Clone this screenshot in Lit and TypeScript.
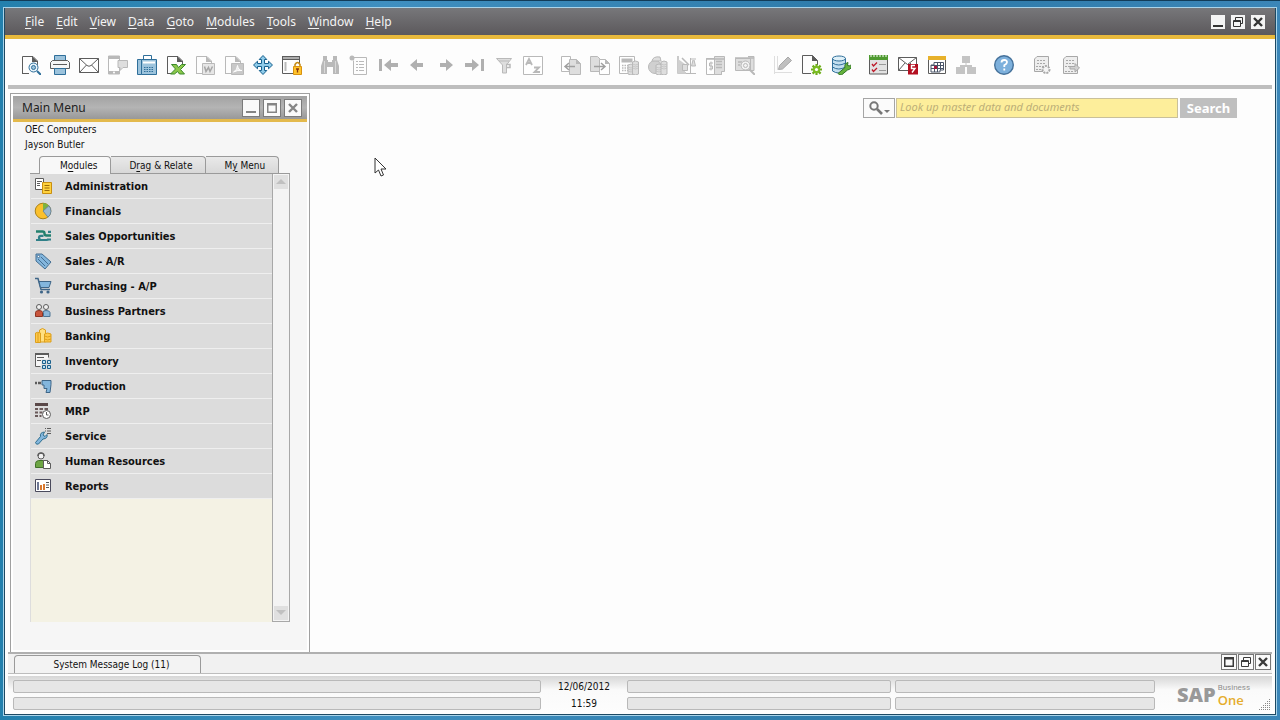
import { LitElement, html, svg, css } from "lit";
import { customElement, state } from "lit/decorators.js";
import { classMap } from "lit/directives/class-map.js";

const G = "#b9b9b9";
const L = "#dedede";
const D = "#5c5c5c";
const B = "#2f6f9a";
const S = "#9cc3dc";

const coins = (x: number, y: number, h: number, f: string, s: string) => svg`
  <path d="M${x} ${y + 1}q3-2 6 0v${h}q-3 2-6 0z" fill=${f} stroke=${s}/>
  <path d="M${x} ${y + 3}q3 2 6 0M${x} ${y + 5}q3 2 6 0M${x} ${y + 7}q3 2 6 0" fill="none" stroke=${s} stroke-width=".6"/>`;

const page = (c: string) => svg`<path d="M1.500 19V1.500H12L16.500 6V10M1.500 18.500H8" fill="none" stroke=${c}/><path d="M11 1v6h6z" fill=${c}/>`;

const icons: Record<string, unknown> = {
  preview: svg`${page(D)}<circle cx="12.500" cy="12.500" r="4.500" fill="#e8f3fa" stroke=${B}/><circle cx="12.500" cy="12.500" r="2" fill=${S} stroke=${B}/><path d="M16 16l4 4" stroke=${B} stroke-width="2"/>`,
  print: svg`<path d="M4.500 .5h11v5h-11z" fill=${S} stroke=${B}/><path d="M2.500 5.500h15l2 2v6h-19v-6z" fill="#f6f6f6" stroke=${D}/><path d="M3 9.500h14" stroke=${D}/><path d="M4.500 13.500h11v6h-11z" fill=${S} stroke=${B}/>`,
  mail: svg`<path d="M.5 3.500h19v14H.5z" fill="#fff" stroke=${D}/><path d="M.5 3.500L8 10.500q2 1.500 4 0l7.500-7M.5 17.500L7.500 10M19.500 17.500L12.500 10" fill="none" stroke=${D}/>`,
  sms: svg`<path d="M.5 1h11v18H.5z" fill="#fff" stroke=${G}/><path d="M0 1h12v3H0zM0 16h12v3H0z" fill=${G}/><circle cx="6" cy="17.500" r="1" fill="#fff"/><path d="M10 5.500h9.500v7H15l-3 3v-3h-2z" fill=${L} stroke=${G}/>`,
  fax: svg`<path d="M6.500 .5h8v5h-8z" fill="#fff" stroke=${B}/><path d="M.5 4.500h4v15h-4z" fill=${S} stroke=${B}/><path d="M4.500 4.500h15v15h-15z" fill=${S} stroke=${B}/><path d="M6 7.500h12" stroke="#fff" stroke-width="2"/><path d="M7 12.500h10M7 14.500h10M7 16.500h10" stroke=${B} stroke-dasharray="1.500 1"/>`,
  excel: svg`${page(D)}<path d="M5.500 9.500h5l2 3 3-3h4l-5 5 4 4.500h-5l-2-2.500-3 2.500h-4l5-5z" fill="#8cc84b" stroke="#3c8a2c"/>`,
  word: svg`${page(G)}<path d="M7.500 8.500h12v11h-12z" fill="#e6e6e6" stroke=${G}/><path d="M9.500 11.500l1.500 5 2.500-4 1.500 4 2.500-5" fill="none" stroke="#a5a5a5" stroke-width="1.500"/>`,
  pdf: svg`${page(G)}<path d="M7.500 8.500h12v11h-12z" fill="#c8c8c8" stroke=${G}/><path d="M9.500 17q4-2 4-6.500q1 5 4.500 5q-5-.5-8.500 1.500z" fill="#eee" stroke="#fff"/>`,
  move: svg`<path d="M10 .5l3.800 4h-2.300v4h4V6.200l4 3.800-4 3.800v-2.300h-4v4h2.300L10 19.500l-3.800-4h2.300v-4h-4v2.300L.5 10l4-3.800v2.300h4v-4H6.200z" fill="#8fcbe9" stroke="#17618f"/>`,
  lock: svg`<path d="M.5 1v17.500h11M17.500 4v4" fill="none" stroke=${D}/><path d="M0 1h18v4H0z" fill=${D}/><path d="M1 3h16" stroke="#fff"/><path d="M3.500 7v9" stroke=${G} stroke-width="2"/><path d="M13 12V9.500q2.500-4 5 0V12" fill="none" stroke="#c68a12" stroke-width="1.500"/><path d="M11.500 11.500h8v8h-8z" fill="#ffc32b" stroke="#d8920f"/><path d="M14 14h3M15.500 14v3.500" stroke="#8a3a10" stroke-width="1.300"/>`,
  find: svg`<path d="M3 1h4v4h1v2h4V5h1V1h4v4l2 6v8h-6v-7H7v7H1v-8l2-6z" fill=${G}/><path d="M4.500 6v12M15.500 6v12" stroke="#d8d8d8"/>`,
  list: svg`<path d="M4.500 2.500h13v17h-13v-14" fill="none" stroke=${G}/><circle cx="3" cy="3" r="2.500" fill=${G}/><path d="M7 6.500h2m1 0h5M7 9.500h2m1 0h5M7 12.500h2m1 0h5M7 15.500h2m1 0h5" stroke=${G}/>`,
  first: svg`<path d="M1 4h3v12H1zM6 10l7-6v4h7v4h-7v4z" fill="#b0b0b0"/>`,
  prev: svg`<path d="M3 10l7-6v4h6v4h-6v4z" fill="#b0b0b0"/>`,
  next: svg`<path d="M17 10l-7-6v4H4v4h6v4z" fill="#b0b0b0"/>`,
  last: svg`<path d="M19 4h-3v12h3zM14 10L7 4v4H0v4h7v4z" fill="#b0b0b0"/>`,
  filter: svg`<path d="M2.500 3.500h15L12.500 10v8h-4v-8z" fill=${L} stroke=${G}/><path d="M5 6h10" stroke=${G}/><path d="M12 9.500h4v3h-3" fill="none" stroke=${G} stroke-width="1.500"/>`,
  sort: svg`<path d="M.5 1.500h19v18H.5z" fill="#fff" stroke=${G}/><path d="M3 10l3-6 3 6M4 8h4" fill="none" stroke=${G} stroke-width="1.800"/><path d="M11 12.500h5l-4.500 4.500H17" fill="none" stroke=${G} stroke-width="1.800"/>`,
  baseDoc: svg`<path d="M.5 1.500h9v15h-9z" fill="#fff" stroke=${G}/><path d="M8.500 4.500h7l4 4v11h-11z" fill=${L} stroke=${G}/><path d="M15 4v5h5z" fill=${G}/><path d="M14 11.500H5M8 8l-4 3.500 4 3.500" fill="none" stroke="#a0a0a0" stroke-width="1.500"/>`,
  targetDoc: svg`<path d="M.5 1.500h7l4 4v11H.5z" fill=${L} stroke=${G}/><path d="M9.500 4.500h6l4 4v11h-10z" fill="#fff" stroke=${G}/><path d="M15 4v5h5z" fill=${G}/><path d="M4 11.500h10M11 8l4 3.500-4 3.500" fill="none" stroke="#a0a0a0" stroke-width="1.500"/>`,
  calc: svg`<path d="M.5 1.500h15v17H.5z" fill="#fff" stroke=${G}/><path d="M2.500 3.500h11v4h-11z" fill=${G}/><path d="M3 10.500h7M3 13h7M3 15.500h7" stroke=${G} stroke-width="1.500" stroke-dasharray="1.500 1"/>${coins(9, 9, 9, L, G)}${coins(13.5, 6, 12, L, G)}`,
  payment: svg`<circle cx="7" cy="12" r="6.500" fill="#d0d0d0" stroke=${G}/><path d="M4 6q1-5 8-4l1 4z" fill=${L} stroke=${G}/>${coins(8, 9, 9, L, G)}${coins(13, 6, 12, L, G)}`,
  profit: svg`<path d="M1 1v17h8M5 3l7 7" fill="none" stroke=${G} stroke-width="1.500"/><path d="M1 4l7 5v9H1z" fill="#cfcfcf"/><path d="M5.500 9.500h5v6h-5zM13.500 3v16M9 18.500h10M13 4h6M16 5l-1.500 6h4L17 5" fill=${L} stroke=${G}/>`,
  volume: svg`<path d="M.5 3.500h15v16H.5z" fill="#fff" stroke=${G}/><path d="M8.500 1.500h10v15h-3v3h-7z" fill=${L} stroke=${G}/><path d="M10 6.500h6M10 9.500h6M10 12.500h6M0 4h19" stroke=${G} stroke-width="1.300"/><path d="M7 8H3.500v3h3v3H3M5 6.500v9" fill="none" stroke=${G}/>`,
  volumeFind: svg`<path d="M.5 3.500h15v12H.5zM13 1.500h6v14h-4" fill=${L} stroke=${G}/><path d="M0 3h19M3 7h4M3 10h2" stroke=${G} stroke-width="1.500"/><circle cx="10.500" cy="10.500" r="4.500" fill="#f2f2f2" stroke=${G}/><circle cx="10.500" cy="10.500" r="2" fill="none" stroke=${G}/><path d="M14 14l6 6" stroke=${G} stroke-width="2"/>`,
  edit: svg`<path d="M1.500 1v18M1 17.500h18M4.500 1v14" fill="none" stroke=${L}/><path d="M5.500 14.500l1-4L15 2l3.500 3.500-9 8.500z" fill="#c0c0c0" stroke="#a8a8a8"/>`,
  newForm: svg`<path d="M.5 .5h10l5 5V10M.5 .5v18H9" fill="none" stroke=${D}/><path d="M10 0v6h6z" fill=${D}/><path d="M14.500 9v11M9 14.500h11M10.600 10.600l8 8M18.600 10.600l-8 8" stroke="#6fae1b" stroke-width="2.200"/><circle cx="14.500" cy="14.500" r="3.500" fill="#7bbd22"/><circle cx="14.500" cy="14.500" r="1.600" fill="#fff"/>`,
  database: svg`<path d="M1.500 3v13q6 4 13 0V3" fill="#c3dfef" stroke=${B}/><ellipse cx="8" cy="3.500" rx="6.500" ry="2.500" fill="#dff0f8" stroke=${B}/><path d="M1.500 8q6 4 13 0M1.500 12q6 4 13 0" fill="none" stroke=${B}/><path d="M7 18.500l7-6q-1-4 3-5l-.5 3 3 .5 1-2q1 5-4 6l-6 5q-3 0-3.500-1.500z" fill="#64b23c" stroke="#34752a"/>`,
  tasks: svg`<path d="M.5 2.500h18v16.500H.5z" fill="#e2e2e2" stroke=${D}/><path d="M0 0h19v5H0z" fill="#4e9a30"/><path d="M2 0v2m3-2v2m3-2v2m3-2v2m3-2v2m3-2v2" stroke="#fff"/><path d="M3 9l1.500 2L8 7.500M3 14.500l1.500 2L8 13" fill="none" stroke="#bd1828" stroke-width="1.300"/><path d="M10 9.500h7M10 15.500h7" stroke="#9a9a9a"/>`,
  alert: svg`<path d="M.5 2.500h18v13H.5z" fill="#fff" stroke=${D}/><path d="M.5 2.500l9 7 9-7M.5 15.500L7 8M18.500 15.500L12 8" fill="none" stroke=${D}/><path d="M10 9h10v10.500H10z" fill="#b30f20"/><path d="M17 10.500h-3.500v3H17l-3 4" fill="none" stroke="#fff" stroke-width="1.400"/>`,
  calendar: svg`<path d="M1.500 1.500h17v17h-17z" fill="#fff" stroke=${D}/><path d="M1 1h18v4H1z" fill="#e7b12b"/><path d="M7 7.500h9.500v7.500H13v2H4v-7h3zM4 10.500h12M4 13.500h12M7.500 10v7M10.500 7v10M13.500 7v8" fill="none" stroke="#4a5568"/><path d="M7 11h3v3H7z" fill="#a3183c"/>`,
  org: svg`<path d="M6 1h8v7H6zM0 12h9v7H0zM11 12h9v7h-9zM9.500 8h1v3h-1zM4 10h12v2H4z" fill="#c4c4c4"/>`,
  help: svg`<circle cx="10" cy="10" r="9.300" fill="#7db0dc" stroke="#45719a" stroke-width="1.400"/><path d="M7.500 7.500q0-2.500 2.800-2.500t2.700 2.300q0 1.500-2.700 3v1.700M10.300 13.500v2" fill="none" stroke="#fff" stroke-width="1.800"/>`,
  sheetGear: svg`<path d="M5 1.500h11.500v15h-14V4z" fill="#eee" stroke="#a8a8a8"/><path d="M5 5.500h9M5 8.500h9M4 11.500h9M4 14.500h6" stroke="#a8a8a8" stroke-dasharray="2 1"/><circle cx="14" cy="14.500" r="3.500" fill="#f4f4f4" stroke="#a8a8a8" stroke-width="2" stroke-dasharray="2 1"/>`,
  sheetArrow: svg`<path d="M5 1.500h11.500v17h-14V4z" fill="#eee" stroke="#a8a8a8"/><path d="M5 5.500h9M5 8.500h9M4 11.500h5M4 16.500h9" stroke="#a8a8a8" stroke-dasharray="2 1"/><path d="M9 11.500h5v-3l4.500 4.500-4.500 4v-3H9z" fill="#d0d0d0" stroke="#a8a8a8"/>`,

  administration: svg`<path d="M1.500 1.500h8v11h-8z" fill="#fff" stroke=${D}/><path d="M3 4.500h5M3 6.500h3M3 8.500h3" stroke=${D}/><path d="M8.500 5.500h9v11h-9z" fill="#ffd23e" stroke="#c98f10"/><path d="M10.500 8.500h5M10.500 11h5M10.500 13.500h5" stroke="#9a6b08"/>`,
  financials: svg`<circle cx="9" cy="9" r="7.800" fill="#fbc02d" stroke="#a98218"/><path d="M9 9V1a8 8 0 0 1 6 2.700z" fill="#7cb342"/><path d="M9 9l6-5.300A8 8 0 0 1 14 15.200z" fill="#9ab8d0" stroke="#5e7e98" stroke-width=".8"/>`,
  opportunities: svg`<path d="M2 4.500h6.500q2 0 2 2t2 2H17" fill="none" stroke="#23806d" stroke-width="2.400"/><path d="M17 4.800h-3M2 13h10.500q1.500 0 1.500-.5h3M9.500 8.800H7q-2 0-2 2t2 2" fill="none" stroke="#2f8088" stroke-width="2.200"/>`,
  sales: svg`<path d="M2 2h6l9 8-6 7-9-8z" fill="#83b6dd" stroke="#456f93"/><path d="M4 7l7 7M7 5l7 7" stroke="#456f93"/><circle cx="4.500" cy="4.500" r="1.200" fill="#fff" stroke="#456f93"/>`,
  purchasing: svg`<path d="M1 1.500h3l3 11h9" fill="none" stroke="#3f6688" stroke-width="1.500"/><path d="M5 4.500h12l-2 6H6.500z" fill="#83b6dd" stroke="#3f6688"/><circle cx="7.500" cy="15" r="1.600" fill="#3f6688"/><circle cx="14" cy="15" r="1.600" fill="#3f6688"/>`,
  partners: svg`<circle cx="5" cy="5" r="2.500" fill="#f0f0f0" stroke=${D}/><circle cx="12" cy="5" r="2.500" fill="#f0f0f0" stroke=${D}/><path d="M1.500 14.500v-4q0-2 3.500-2t3.500 2v4z" fill="#c9563d" stroke="#8e3524"/><path d="M9.500 14.500v-4q-1-2 2.500-2t4 2v4z" fill="#8db7d9" stroke="#4d7494"/>`,
  banking: svg`<path d="M5.500 3q3-3 6 0v12h-6z" fill="#ffdf80" stroke="#dc9f1c"/><path d="M1.500 6q2-1.500 5 0v9.500h-5zM10.500 7q3-2 6.500 0v8h-6.500z" fill="#ffc94a" stroke="#dc9f1c"/><path d="M10.500 9q3 2 6.500 0M10.500 12q3 2 6.500 0M4 6v9" fill="none" stroke="#dc9f1c"/>`,
  inventory: svg`<path d="M1.500 1.500h13v6h-7v7h-6z" fill="#f6f6f6"/><path d="M14.500 1.500v4M1.500 1.500v13h5" fill="none" stroke=${D}/><path d="M1 1h14v2H1z" fill=${D}/><path d="M3 5.500h7M3 8.500h4" stroke=${D}/><path d="M8.500 8.500h3v3h-3zM13.500 8.500h3v3h-3zM8.500 13.500h3v3h-3zM13.500 13.500h3v3h-3z" fill="#bfe0f2" stroke="#1c618d"/>`,
  production: svg`<path d="M1 6h2M4 6h3" stroke=${D} stroke-width="2.500"/><path d="M8 3.500h9v4l-1 8h-4l1-4h-3V8H8z" fill="#83b6dd" stroke="#3f6688"/>`,
  mrp: svg`<path d="M1 1h13v3H1z" fill="#5a4848"/><path d="M1 6h3v2H1zM5.500 6H9v2H5.500zM10.500 6H14v2h-3.500zM1 9.500h3v2H1zM5.500 9.500h3v2h-3zM1 13h3v2H1zM5.500 13h2v2h-2z" fill="#6a5a5a"/><circle cx="12.500" cy="12.500" r="4" fill="#fff" stroke=${D}/><path d="M12.500 10v3h2" fill="none" stroke=${D}/>`,
  service: svg`<path d="M1.500 15.500l5-6q-1-4 4-4.500l-1.500 3 2 1.500 2-2q1 4-4 4.500l-4.500 5q-2.500 1-3-1.500z" fill="#83b6dd" stroke="#2f6f8f"/><path d="M11 1.500h1m1 0h4M11 4h1m1 0h4M13 6.500h4" stroke=${D}/>`,
  hr: svg`<circle cx="7" cy="4" r="3" fill="#f2f2f2" stroke=${D}/><path d="M4 4q0-3 3-3t3 3" fill="none" stroke=${D} stroke-width="1.500"/><path d="M1.500 15.500v-4q0-2.500 3-3h5l1 7z" fill="#6da544" stroke="#41702a"/><path d="M9.500 8.500h4l3 3v5h-7z" fill="#fff" stroke=${D}/><path d="M13.500 8.500v3h3" fill="none" stroke=${D}/>`,
  reports: svg`<path d="M1.500 2.500h15v12h-15z" fill="#fff" stroke="#4a4a5c"/><path d="M4 5v8" stroke="#3c4a70" stroke-width="1.500"/><path d="M7 8v5M10 7v6" stroke="#d9792f" stroke-width="2"/><path d="M12 5.500h3M12 8h3M12 10.500h3" stroke="#555"/>`,

  min: svg`<path d="M2 10h10v2H2z" fill="currentColor"/>`,
  max: svg`<path d="M2 2h10v10H2zM3.500 4.500v6h7v-6z" fill="currentColor" fill-rule="evenodd"/>`,
  restore: svg`<path d="M4.500 5V2.500h7v6H10" fill="none" stroke="currentColor"/><path d="M2.500 5.500h7v6h-7zM2 6.500h8" fill="none" stroke="currentColor"/>`,
  close: svg`<path d="M3 3l8 8M11 3l-8 8" stroke="currentColor" stroke-width="2.400"/>`,
};

const icon = (name: string, box: number) =>
  html`<svg viewBox="0 0 ${box} ${box}" width=${box} height=${box} aria-hidden="true">${icons[name]}</svg>`;

/* "_" precedes the mnemonic letter of a label. */
const mnemonic = (label: string) => {
  const at = label.indexOf("_");
  return html`${label.slice(0, at)}<u>${label[at + 1]}</u>${label.slice(at + 2)}`;
};

const shared = css`
  * { box-sizing: border-box; }
  button, input { font: inherit; color: inherit; margin: 0; padding: 0; border: 0; background: none; border-radius: 0; }
  button { display: inline-flex; align-items: center; justify-content: center; white-space: nowrap; }
  svg { display: block; flex: none; }
  u { text-underline-offset: 2px; }
  .small { font: 10px "DejaVu Sans Condensed", "DejaVu Sans", sans-serif; color: #111; }
`;

@customElement("b1-toolbar")
class B1Toolbar extends LitElement {
  static styles = [shared, css`
    :host { display: flex; gap: 18px; height: 50px; margin: 0 3px; padding: 6px 13px 0; align-items: center; border-bottom: 4px solid #bebebe; box-sizing: border-box; }
    .group { display: flex; gap: 9px; }
  `];
  private groups = [
    ["preview", "print", "mail", "sms", "fax", "excel", "word", "pdf", "move", "lock"],
    ["find", "list", "first", "prev", "next", "last", "filter", "sort"],
    ["baseDoc", "targetDoc", "calc", "payment", "profit", "volume", "volumeFind"],
    ["edit", "newForm", "database"],
    ["tasks", "alert", "calendar", "org"],
    ["help"],
    ["sheetGear", "sheetArrow"],
  ];
  render() {
    return this.groups.map((g) => html`<div class="group">${g.map((n) => html`<button aria-label=${n}>${icon(n, 20)}</button>`)}</div>`);
  }
}

@customElement("b1-main-menu")
class B1MainMenu extends LitElement {
  static styles = [shared, css`
    :host { box-sizing: border-box; display: flex; flex-direction: column; width: 300px; border: 1px solid #a0a0a0; border-bottom: 0; background: #f6f6f6; padding: 2px; box-shadow: inset 0 0 0 2px #fff; }
    .title { display: flex; align-items: center; gap: 3px; height: 26px; padding: 0 5px 0 9px; background: linear-gradient(#a2a2a2, #b4b4b4 50%, #989898); border-bottom: 3px solid #e3b94c; }
    .name { flex: 1; margin: 0; font-size: 12px; font-weight: 400; color: #222; }
    .ctl { width: 18px; height: 18px; background: #fafafa; border: 1px solid #7b7b7b; color: #858585; }
    .who { padding: 0 12px; }
    .who p { margin: 0; line-height: 15px; }
    .tabs { display: flex; align-items: flex-end; height: 22px; margin: 0 17px; padding-left: 9px; border-bottom: 1px solid #9a9a9a; }
    .tab { height: 17px; padding: 0 13px 0 18px; border: 1px solid #9a9a9a; border-left-width: 0; border-bottom: 0; border-radius: 0 4px 0 0; background: linear-gradient(#e9e9e9, #d8d8d8); }
    .tab.on { height: 18px; padding-left: 20px; margin-bottom: -1px; border-left-width: 1px; border-radius: 4px 4px 0 0; background: #f8f8f8; }
    .body { flex: 1; display: flex; margin: 0 17px 28px; min-height: 0; }
    .list { flex: 1; margin: 0; padding: 0; list-style: none; background: #f4f2e4; border-left: 1px solid #ddd; }
    .list li { display: flex; }
    .item { width: 100%; height: 25px; justify-content: flex-start; gap: 13px; padding-left: 3px; background: #dcdcdc; border-bottom: 1px solid #efefef; font: bold 11px "DejaVu Sans Condensed", "DejaVu Sans", sans-serif; color: #111; }
    .bar { display: flex; flex-direction: column; justify-content: space-between; width: 18px; border: 1px solid #a8a8a8; border-top: 0; background: #f4f4f4; padding: 1px; }
    .arrow { height: 14px; background: #e0e0e0; color: #c0c0c0; }
  `];
  @state() private tab = 0;
  private modules: [string, string][] = [
    ["administration", "Administration"], ["financials", "Financials"], ["opportunities", "Sales Opportunities"],
    ["sales", "Sales - A/R"], ["purchasing", "Purchasing - A/P"], ["partners", "Business Partners"],
    ["banking", "Banking"], ["inventory", "Inventory"], ["production", "Production"], ["mrp", "MRP"],
    ["service", "Service"], ["hr", "Human Resources"], ["reports", "Reports"],
  ];
  render() {
    return html`
      <header class="title">
        <h2 class="name">Main Menu</h2>
        ${["min", "max", "close"].map((n) => html`<button class="ctl" aria-label=${n}>${icon(n, 14)}</button>`)}
      </header>
      <div class="who small"><p>OEC Computers</p><p>Jayson Butler</p></div>
      <div class="tabs" role="tablist">
        ${["M_odules", "D_rag & Relate", "M_y Menu"].map((t, i) => html`<button role="tab" class=${classMap({ small: true, tab: true, on: i === this.tab })} @click=${() => (this.tab = i)}><span>${mnemonic(t)}</span></button>`)}
      </div>
      <div class="body">
        <ul class="list">
          ${this.modules.map(([n, label]) => html`<li><button class="item">${icon(n, 18)}${label}</button></li>`)}
        </ul>
        <div class="bar">
          <button class="arrow" aria-label="Scroll up"><svg width="10" height="6"><path d="M0 5l5-5 5 5z" fill="currentColor"/></svg></button>
          <button class="arrow" aria-label="Scroll down"><svg width="10" height="6"><path d="M0 0l5 5 5-5z" fill="currentColor"/></svg></button>
        </div>
      </div>`;
  }
}

@customElement("app-root")
class AppRoot extends LitElement {
  static styles = [shared, css`
    :host { display: block; min-height: 100vh; font-family: "Noto Sans", "Open Sans", sans-serif; color: #222; }
    .frame { min-height: 100vh; display: flex; flex-direction: column; padding: 6px 3px 4px; background: linear-gradient(90deg, #2380ad, #3f8fc0 30%, #2c79a8 70%, #3b86b8); border-top: 1px solid #123c58; }
    .window { flex: 1; display: flex; flex-direction: column; border: 1px solid #a9d4ea; }
    .inner { flex: 1; display: flex; flex-direction: column; border: 1px solid #1d4963; border-top-width: 0; background: #fdfdfd; }
    .menubar { display: flex; align-items: center; height: 31px; padding: 0 10px 0 20px; background: linear-gradient(#77777a, #5c595c); border-bottom: 4px solid #e8b93c; }
    .menus { flex: 1; display: flex; gap: 12px; font-size: 12px; color: #f4f4f4; }
    .controls { display: flex; gap: 6px; }
    .wctl { width: 14px; height: 14px; background: #f4f4f4; color: #333; }
    .work { flex: 1; display: flex; align-items: stretch; justify-content: space-between; padding: 4px 38px 0 5px; position: relative; }
    .search { display: flex; align-items: stretch; height: 20px; margin-top: 5px; gap: 1px; }
    .look { width: 32px; border: 1px solid #a5a5a5; background: #fbfbfb; }
    .query { width: 282px; padding: 0 3px 3px; margin-right: 1px; background: #fdee9b; border: 1px solid #c9c09a; font-size: 11px; font-style: italic; }
    .query::placeholder { color: #bcae78; opacity: 1; }
    .go { width: 57px; background: #bfbfbf; color: #fff; font-size: 13px; font-weight: 700; }
    .pointer { position: absolute; left: 369px; top: 68px; }
    .log { display: flex; align-items: flex-start; justify-content: space-between; height: 22px; margin: 0 3px; padding: 0 1px 0 6px; border-top: 2px solid #b0b0b0; border-bottom: 1px solid #bdbdbd; background: #f1f1f1; }
    .logtab { align-self: flex-end; width: 187px; height: 18px; padding-left: 8px; border: 1px solid #9a9a9a; border-bottom: 0; border-radius: 4px 4px 0 0; background: #f3f3f3; }
    .mini { display: flex; gap: 1px; }
    .mctl { width: 16px; height: 16px; background: #fafafa; border: 1px solid #777; color: #3a3a3a; }
    .status { display: flex; gap: 4px; margin: 2px 3px 0; padding: 4px 0 4px 5px; background: linear-gradient(#d6d6d6, #fafafa 14px, #fdfdfd); }
    .col { display: flex; flex-direction: column; gap: 4px; }
    .wide { flex: 528; }
    .mid { flex: 264; }
    .narrow { flex: 260; }
    .field { height: 13px; border: 1px solid #b9b9b9; border-radius: 2px; background: #e6e6e6; }
    .clock { width: 78px; text-align: center; }
    .clock time { line-height: 13px; }
    .brand { position: relative; width: 113px; display: flex; align-items: center; gap: 2px; padding-left: 18px; }
    .sap { font: 800 20px/20px "Open Sans", sans-serif; color: #999; }
    .product { display: flex; flex-direction: column; }
    .biz { font: 8px/10px Roboto, sans-serif; color: #8f8f8f; }
    .one { font: 600 13px/14px "Open Sans", sans-serif; color: #e5ad2c; }
    .grip { position: absolute; right: 1px; bottom: 0; color: #888; }
  `];
  private menus = ["_File", "_Edit", "_View", "_Data", "_Goto", "_Modules", "_Tools", "_Window", "_Help"];
  render() {
    const field = html`<div class="field"></div>`;
    return html`
      <div class="frame"><div class="window"><div class="inner">
        <nav class="menubar">
          <div class="menus">${this.menus.map((m) => html`<button><span>${mnemonic(m)}</span></button>`)}</div>
          <div class="controls">${["min", "restore", "close"].map((n) => html`<button class="wctl" aria-label=${n}>${icon(n, 14)}</button>`)}</div>
        </nav>
        <b1-toolbar></b1-toolbar>
        <main class="work">
          <b1-main-menu></b1-main-menu>
          <form class="search" @submit=${(e: Event) => e.preventDefault()}>
            <button type="button" class="look" aria-label="Search in">
              <svg width="24" height="16"><circle cx="7" cy="6" r="3.700" fill="none" stroke="#777" stroke-width="2"/><path d="M10 9l5 5" stroke="#777" stroke-width="2.600"/><path d="M17 10h6l-3 3z" fill="#777"/></svg>
            </button>
            <input class="query" aria-label="Look up" placeholder="Look up master data and documents" />
            <button class="go">Search</button>
          </form>
          <svg class="pointer" width="13" height="20"><path d="M1 1v15l3.500-3 2.500 6 2.500-1L7 12h5z" fill="#fff" stroke="#333"/></svg>
        </main>
        <section class="log">
          <button class="logtab small">System Message Log (11)</button>
          <div class="mini">${["max", "restore", "close"].map((n) => html`<button class="mctl" aria-label=${n}>${icon(n, 14)}</button>`)}</div>
        </section>
        <footer class="status">
          <div class="col wide">${field}${field}</div>
          <div class="col clock small"><time>12/06/2012</time><time>11:59</time></div>
          <div class="col mid">${field}${field}</div>
          <div class="col narrow">${field}${field}</div>
          <div class="brand">
            <span class="sap">SAP</span>
            <div class="product"><span class="biz">Business</span><span class="one">One</span></div>
            <svg class="grip" width="12" height="12"><path d="M10 1.500h1.500M8 3.500h4M6 5.500h6M4 7.500h8M2 9.500h10M0 11.500h12" stroke="currentColor" stroke-dasharray="1 1"/></svg>
          </div>
        </footer>
      </div></div></div>`;
  }
}
